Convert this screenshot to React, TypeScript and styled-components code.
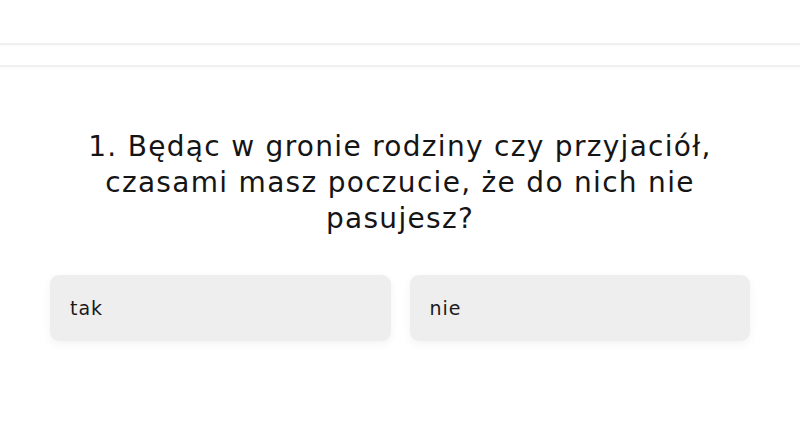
import React from "react";
import styled, { createGlobalStyle } from "styled-components";

const Global = createGlobalStyle`
  html, body { margin: 0; padding: 0; background: #ffffff; }
  body { font-family: "DejaVu Sans", "Noto Sans", sans-serif; color: #1a1a1a; }
`;

const Page = styled.div`
  width: 800px;
  height: 439px;
  display: flex;
  flex-direction: column;
  background: #ffffff;
  overflow: hidden;
`;

const TopBar = styled.div`
  height: 43px;
  border-bottom: 2px solid #f0f0f0;
  box-shadow: 0 1px 2px rgba(0, 0, 0, 0.02);
`;

const SubBar = styled.div`
  height: 20px;
  border-bottom: 2px solid #f0f0f0;
  box-shadow: 0 2px 3px rgba(0, 0, 0, 0.02);
`;

const Content = styled.main`
  display: flex;
  flex-direction: column;
  align-items: center;
  padding: 62px 50px 0;
`;

const Question = styled.h1`
  margin: 0;
  font-family: "DejaVu Sans", "Noto Sans", sans-serif;
  font-weight: 400;
  font-size: 28px;
  line-height: 36px;
  letter-spacing: 1.3px;
  text-align: center;
  color: #151515;
`;

const Answers = styled.div`
  align-self: stretch;
  display: grid;
  grid-template-columns: 1fr 1fr;
  gap: 19px;
  margin-top: 38px;
`;

const AnswerButton = styled.button`
  height: 66px;
  border: none;
  border-radius: 9px;
  background: #eeeeee;
  box-shadow: 0 3px 10px rgba(0, 0, 0, 0.05);
  padding: 0 20px;
  text-align: left;
  font-family: "DejaVu Sans", "Noto Sans", sans-serif;
  font-size: 19px;
  letter-spacing: 1px;
  color: #1a1a1a;
  cursor: pointer;
`;

export default function App() {
  return (
    <Page>
      <Global />
      <TopBar />
      <SubBar />
      <Content>
        <Question>
          1. Będąc w gronie rodziny czy przyjaciół,
          <br />
          czasami masz poczucie, że do nich nie
          <br />
          pasujesz?
        </Question>
        <Answers>
          <AnswerButton>tak</AnswerButton>
          <AnswerButton>nie</AnswerButton>
        </Answers>
      </Content>
    </Page>
  );
}
